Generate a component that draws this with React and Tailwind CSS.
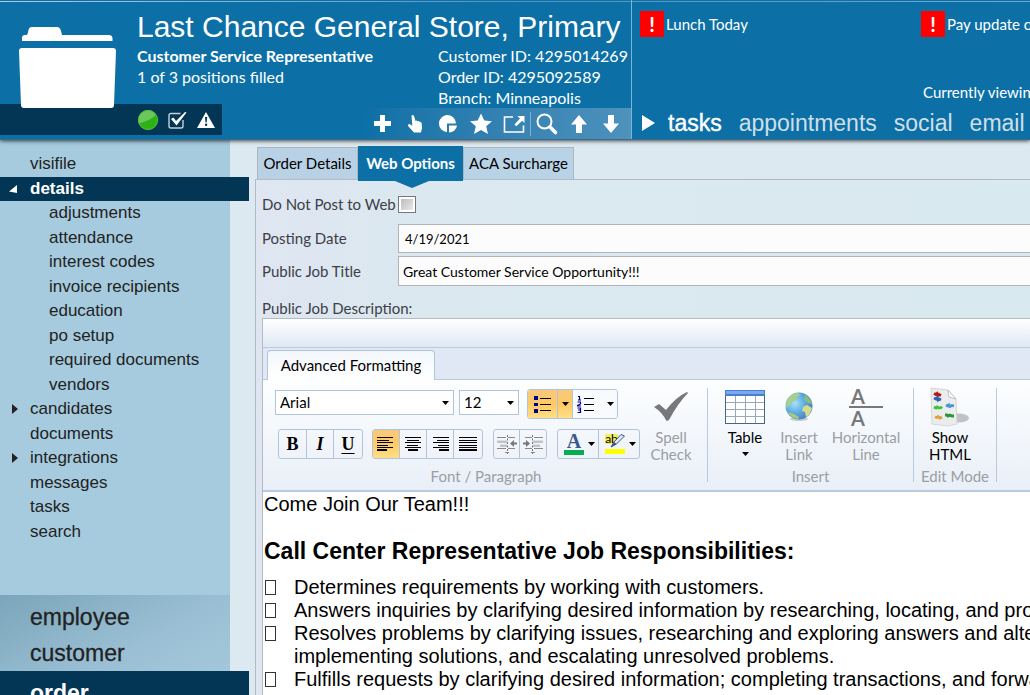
import { useState } from 'react';

const menuItems = [
  { label: 'visifile' },
  { label: 'details', open: true, active: true },
  { label: 'adjustments', child: true },
  { label: 'attendance', child: true },
  { label: 'interest codes', child: true },
  { label: 'invoice recipients', child: true },
  { label: 'education', child: true },
  { label: 'po setup', child: true },
  { label: 'required documents', child: true },
  { label: 'vendors', child: true },
  { label: 'candidates', closed: true },
  { label: 'documents' },
  { label: 'integrations', closed: true },
  { label: 'messages' },
  { label: 'tasks' },
  { label: 'search' },
];

const alerts = ['Lunch Today', 'Pay update on'];
const feeds = ['tasks', 'appointments', 'social', 'email'];

const duties = [
  ['Determines requirements by working with customers.'],
  ['Answers inquiries by clarifying desired information by researching, locating, and providing'],
  [
    'Resolves problems by clarifying issues, researching and exploring answers and alternative',
    'implementing solutions, and escalating unresolved problems.',
  ],
  ['Fulfills requests by clarifying desired information; completing transactions, and forwarding'],
];

const Caret = ({ className = '' }) => (
  <svg width="7" height="4" viewBox="0 0 7 4" className={className}>
    <path d="M0 0h7L3.5 4z" fill="#000" />
  </svg>
);

/* ---------- header ---------- */

const FolderIcon = () => (
  <svg width="97" height="82" viewBox="0 0 97 82" className="absolute left-[19px] top-[27px]" fill="#fff">
    <path d="M3 14V11Q3 8 6 8H8Q9 6 9.500 3Q10 0 13 0H38Q41 0 42 4L43 8H90Q93 8 93.500 11V14Z" />
    <path d="M0 24Q0 21 3 21H94Q97 21 97 24L95 78Q95 81 92 81H5Q2 81 2 78Z" />
  </svg>
);

const StatusBar = () => (
  <div className="flex h-[31px] w-[222px] items-center bg-[#033654] pl-[138px]">
    <svg width="20" height="20" viewBox="0 0 20 20">
      <circle cx="10" cy="10" r="10" fill="#2bb214" />
      <path d="M0.500 9A9.600 9.600 0 0 1 18 4.500Q14 10 1 13.500Q0 11 0.500 9Z" fill="#6dc65c" />
      <circle cx="10" cy="10" r="9.500" fill="none" stroke="#58bd47" />
    </svg>
    <svg width="19" height="18" viewBox="0 0 19 18" className="ml-[10px]">
      <path d="M12.500 2.500H3Q1 2.500 1 4.500V15Q1 17 3 17H13Q15 17 15 15V9" fill="none" stroke="#c5d0d8" strokeWidth="1.400" />
      <path d="M3 8L5.500 6.500L8 10L17 1L18.500 1.500L8.500 14.500Z" fill="#fff" />
    </svg>
    <svg width="18" height="16" viewBox="0 0 18 16" className="ml-[10px]">
      <path d="M9 0L18 16H0Z" fill="#fff" />
      <path d="M8 5h2.200l-.5 5.500h-1.200z" fill="#033654" />
      <circle cx="9.100" cy="12.700" r="1.200" fill="#033654" />
    </svg>
  </div>
);

const tools = [
  { label: 'Add', draw: <path d="M10 3h5v6h6v5h-6v6h-5v-6h-6v-5h6z" /> },
  {
    label: 'Actions',
    draw: (
      <path d="M8.500 3.500Q10 2.500 11 4L12.500 9Q13.500 8 14.500 9.200Q15.700 8.400 16.500 9.800Q18.300 9.300 18.700 11.500L19 16Q18.500 18 18 20.500H11L5 14Q4.500 12 6.500 12L9.300 13.800Z" />
    ),
  },
  {
    label: 'Chart',
    draw: (
      <>
        <path d="M11 11.500V20A8.500 8.500 0 1 1 19.800 10V11.500Z" />
        <path d="M13 13.500H21A8 8 0 0 1 13 20.500Z" />
      </>
    ),
  },
  {
    label: 'Favorite',
    draw: <path d="M12 1.500L15.300 8.500L23 9.300L17.200 14.300L19 22L12 18L5 22L6.800 14.300L1 9.300L8.700 8.500Z" />,
  },
  {
    label: 'Open in window',
    draw: (
      <>
        <path d="M11 5H2.500V20H21.500V13.500" fill="none" stroke="#fff" strokeWidth="1.600" />
        <path d="M15.500 4H22.500V11L20.200 8.700L14.300 14.200L12.500 12.400L18 6.500Z" />
      </>
    ),
  },
];

const recordTools = [
  {
    label: 'Search',
    draw: (
      <>
        <circle cx="9.500" cy="9.500" r="7" fill="none" stroke="#fff" strokeWidth="2" />
        <path d="M15 15L20.500 20.500" stroke="#fff" strokeWidth="3.600" strokeLinecap="round" />
      </>
    ),
  },
  { label: 'Previous', draw: <path d="M12 3L20 12.500H15V21H9V12.500H4Z" /> },
  { label: 'Next', draw: <path d="M12 21L20 11.500H15V3H9V11.500H4Z" /> },
];

const ToolIcon = ({ children }) => (
  <svg width="24" height="24" viewBox="0 0 24 24" fill="#fff">
    {children}
  </svg>
);

const RecordToolbar = () => (
  <div className="flex h-[31px] items-center self-end bg-linear-to-r from-[#0c70a6] to-[#4e92bd] pr-1">
    {tools.map((t) => (
      <button key={t.label} aria-label={t.label} className="flex w-[33px] justify-center">
        <ToolIcon>{t.draw}</ToolIcon>
      </button>
    ))}
    <div className="flex border-l border-[#7fb2d2]">
      {recordTools.map((t) => (
        <button key={t.label} aria-label={t.label} className="flex w-8 justify-center">
          <ToolIcon>{t.draw}</ToolIcon>
        </button>
      ))}
    </div>
  </div>
);

const Header = () => (
  <header className="relative z-20 flex border-b border-[#3b6a85] bg-[#0c70a6] text-white shadow-[0_1px_4px_rgba(0,0,0,0.7)]">
    <div className="absolute inset-x-0 top-px h-px bg-linear-to-r from-[#a9cde2] via-[#4d95c0] to-[#6aa9cd]" />
    <div className="relative w-[632px] shrink-0 border-r border-[#7db3d3] pt-[9px]">
      <FolderIcon />
      <div className="pl-[137px]">
        <h1 className="h-9 text-[30px] leading-9 whitespace-nowrap">Last Chance General Store, Primary</h1>
        <div className="flex font-[family-name:Lato,sans-serif] text-base leading-[21px] whitespace-nowrap">
          <div className="w-[301px]">
            <p className="font-bold">Customer Service Representative</p>
            <p>1 of 3 positions filled</p>
          </div>
          <div>
            <p>Customer ID: 4295014269</p>
            <p>Order ID: 4295092589</p>
            <p>Branch: Minneapolis</p>
          </div>
        </div>
      </div>
      <div className="-mt-1 flex h-[35px] justify-between">
        <StatusBar />
        <RecordToolbar />
      </div>
    </div>
    <div className="flex min-w-0 flex-1 flex-col justify-between overflow-hidden pl-2 pt-[11px] whitespace-nowrap">
      <div className="flex font-[family-name:Lato,sans-serif] text-[15px]">
        {alerts.map((a) => (
          <div key={a} className="flex w-[281px] shrink-0 items-center gap-[2px]">
            <span className="flex h-[26px] w-6 items-center justify-center bg-[#fe0000] text-xl leading-6 font-bold">!</span>
            {a}
          </div>
        ))}
      </div>
      <div>
        <p className="pl-[283px] font-[family-name:Lato,sans-serif] text-[15px] leading-[30px]">Currently viewing</p>
        <nav className="flex h-8 items-center gap-[17px] text-[23px] text-[#cfdfe9]">
          <svg width="13" height="16" viewBox="0 0 13 16" className="ml-[2px] -mr-1 shrink-0">
            <path d="M0 0L13 8L0 16Z" fill="#fff" />
          </svg>
          {feeds.map((f) => (
            <a key={f} href={`#${f}`} className={f === 'tasks' ? 'text-white [-webkit-text-stroke:0.4px_white]' : ''}>
              {f}
            </a>
          ))}
        </nav>
      </div>
    </div>
  </header>
);

/* ---------- sidebar ---------- */

const MenuItem = ({ item }) => (
  <li className={item.active ? 'relative z-10 w-[249px] bg-[#033654] font-bold text-white' : ''}>
    <a href="#menu" className="flex h-full items-center">
      <span className={item.child ? 'w-[49px]' : 'w-[30px]'}>
        {item.open && (
          <svg width="9" height="8" viewBox="0 0 9 8" className="ml-[9px]">
            <path d="M0 6.500L8 0V8Z" fill="#fff" />
          </svg>
        )}
        {item.closed && (
          <svg width="6" height="10" viewBox="0 0 6 10" className="ml-3">
            <path d="M0 0L6 5L0 10Z" fill="#222" />
          </svg>
        )}
      </span>
      {item.label}
    </a>
  </li>
);

const Sidebar = () => (
  <aside className="flex w-[230px] shrink-0 flex-col bg-[#a6cbde] pt-3 text-[#222]">
    <ul className="grid h-[392px] shrink-0 auto-rows-fr text-[17px] leading-6">
      {menuItems.map((item) => (
        <MenuItem key={item.label} item={item} />
      ))}
    </ul>
    <nav className="mt-[51px] flex-1 bg-linear-to-br from-[#7ba5ba] via-[#9abfd4] to-[#a9cbdd] pt-1 text-[23px]">
      <a href="#employee" className="flex h-9 items-center pl-[30px] [-webkit-text-stroke:0.3px_#222]">employee</a>
      <a href="#customer" className="flex h-9 items-center pl-[30px] [-webkit-text-stroke:0.3px_#222]">customer</a>
      <a href="#order" className="relative z-10 flex h-11 w-[249px] items-center bg-[#033654] pl-[30px] font-bold text-white">
        order
      </a>
    </nav>
  </aside>
);

/* ---------- rich text editor ---------- */

const boxed = 'flex h-[30px] overflow-hidden rounded-[3px] border border-[#b2c4da] divide-x divide-[#b2c4da]';
const pressed = 'bg-linear-to-b from-[#f9c87c] via-[#ffc965] to-[#ffdf86]';

const alignShift = { left: 0, center: 1, right: 2 };

const AlignIcon = ({ mode }) => {
  const widths = [16, 12, 16, 11, 16, 10];
  return (
    <svg width="18" height="14" viewBox="0 0 18 14" fill="#000" shapeRendering="crispEdges">
      {widths.map((w, i) => {
        const width = mode === 'justify' ? 18 : w;
        const x = mode === 'justify' ? 0 : Math.floor((alignShift[mode] * (18 - width)) / 2);
        return <rect key={i} x={x} y={[0, 3, 5, 8, 10, 12][i]} width={width} height={i === 5 ? 2 : 1} />;
      })}
    </svg>
  );
};

const IndentIcon = ({ out }) => (
  <svg width="20" height="19" viewBox="0 0 20 19">
    <g transform={out ? '' : 'translate(20 0) scale(-1 1)'}>
      <path d="M0 2.500h9M11 2.500h7M0 13.500h9M11 13.500h7M8 17.500h4" stroke="#8a8a8a" />
      <path d="M0 5.500h10v2.500h-10zM3 9.500h7v2.500h-7z" fill="#c4c4c4" />
      <path d="M10.500 0v19" stroke="#777" strokeDasharray="2 1.500" />
      <path d="M13 8.500L17 5v2.500h3v2h-3V12Z" fill="#777" />
    </g>
  </svg>
);

const BulletsIcon = () => (
  <svg width="18" height="18" viewBox="0 0 18 18">
    <path d="M0 1h4v4h-4zM0 8h4v3h-4zM0 14h4v4h-4z" fill="#00008b" />
    <path d="M6 3.500h11M6 9.500h11M6 15.500h11" stroke="#000" />
  </svg>
);

const NumbersIcon = () => (
  <svg width="18" height="18" viewBox="0 0 18 18">
    <path
      d="M1 1.500h1.500V5M1 5h3M0.500 7h3v2l-3 1.500v.5h3.500M0.500 13h3v4.500h-3M1 15h2.500"
      fill="none"
      stroke="#00008b"
      strokeWidth="1.200"
    />
    <path d="M7 3.500h10M7 9.500h10M7 15.500h10" stroke="#000" />
  </svg>
);

const HighlightIcon = () => (
  <span className="relative flex h-5 w-5 flex-col">
    <span className="h-[10px] w-[13px] bg-[#f3ef5f] text-xs leading-[10px] text-black">ab</span>
    <svg width="20" height="14" viewBox="0 0 20 14" className="absolute left-0 top-0">
      <path d="M6 13L9 8L16 0.500L19.500 2L11.500 10Z" fill="#dfe8f5" stroke="#3c5680" />
      <path d="M6 13L9 8L11.500 10Z" fill="#3c5680" />
    </svg>
    <span className="mt-[5px] h-[5px] w-5 bg-[#ffff00]" />
  </span>
);

const TableIcon = () => (
  <svg width="40" height="34" viewBox="0 0 40 34">
    <rect x="0.500" y="0.500" width="39" height="33" fill="#fff" stroke="#47648c" />
    <path d="M0 0h40v6h-40z" fill="#4a7fd0" />
    <path d="M1 1h38v3h-38z" fill="#7ba8ee" />
    <path d="M10.500 6v27M20.500 6v27M30.500 6v27M1 12.500h38M1 19.500h38M1 26.500h38" stroke="#9aa7b8" />
  </svg>
);

const GlobeIcon = () => (
  <svg width="28" height="30" viewBox="0 0 28 30">
    <defs>
      <radialGradient id="sea" cx="0.350" cy="0.400" r="0.700">
        <stop offset="0" stopColor="#a8e2f8" />
        <stop offset="0.500" stopColor="#5eaee4" />
        <stop offset="1" stopColor="#4a78ba" />
      </radialGradient>
    </defs>
    <ellipse cx="14" cy="27" rx="9" ry="2" fill="#c8ced6" />
    <circle cx="14" cy="14" r="13.500" fill="url(#sea)" />
    <path d="M2 8Q6 1 13 1L16 3L12 5L11 8L7 10L4 14L1.500 16Q0.500 12 2 8Z" fill="#a6cf8b" />
    <path d="M20 3Q26 7 27 12L23 11L19 8Z" fill="#8dbd7b" />
    <path d="M18 15L22 13L27 16Q25 23 21 25L20 20L17 19Z" fill="#d5dc8c" />
    <path d="M3 20L9 22L14 25L13 27Q6 26 3 20Z" fill="#a8cb76" />
  </svg>
);

const HtmlIcon = () => (
  <svg width="40" height="40" viewBox="0 0 40 40">
    <ellipse cx="28" cy="31" rx="11" ry="4.500" fill="#bfc2c7" />
    <path d="M1 1L18 3L26 12L27 37L18 39L2 37Z" fill="#ececed" stroke="#d5d7da" />
    <path d="M18 3L19 10L26 12Z" fill="#fff" stroke="#a8abb0" strokeWidth="0.700" />
    <g fill="none" strokeWidth="2.800">
      <path d="M4 6.500l2 1l1-1l1 2l1-1l2 1" stroke="#b01c1c" />
      <path d="M4 11l2 1l1-1l1 2l1-1l2 1" stroke="#2a62b4" />
      <path d="M4 20l2 1l1-1l2 1l2-.5l1 1" stroke="#38c83c" />
      <path d="M16 18l2 1l1-1l1 1.500l2-1l2 .5" stroke="#4a94e0" />
      <path d="M15 28l2 0l1 1l2-1l2 1l2 0" stroke="#28963a" />
      <path d="M5 30l2 .5l1-1l2 1.500l2-1" stroke="#dfa03c" />
    </g>
  </svg>
);

const Dropdown = ({ label, value, options, className }) => (
  <div className={`relative h-[25px] ${className}`}>
    <select
      aria-label={label}
      defaultValue={value}
      className="h-full w-full appearance-none border border-[#b2c4da] bg-white pl-1 text-[15px] text-black"
    >
      {options.map((o) => (
        <option key={o}>{o}</option>
      ))}
    </select>
    <Caret className="pointer-events-none absolute right-[5px] top-[11px]" />
  </div>
);

const BigButton = ({ icon, children, className = '' }) => (
  <button className={`flex flex-col items-center text-center text-[15px] leading-[17px] ${className}`}>
    <span className="flex h-[41px] items-center justify-center pb-1">{icon}</span>
    {children}
  </button>
);

const GroupLabel = ({ children, className = '' }) => (
  <div className={`mt-auto text-center text-[15px] leading-3 text-[#9b9ea3] ${className}`}>{children}</div>
);

const FontGroup = () => (
  <div className="flex w-[433px] shrink-0 flex-col border-r border-[#b9cadd]">
    <div className="flex">
      <div className="w-[366px]">
        <div className="flex items-start">
          <Dropdown label="Font" value="Arial" options={['Arial', 'Calibri', 'Verdana']} className="mt-[2px] w-[179px]" />
          <Dropdown label="Size" value="12" options={['10', '12', '14']} className="mt-[2px] ml-[5px] w-[60px]" />
          <div className={`${boxed} ml-2 mt-px`}>
            <button aria-label="Bullets" className={`flex w-[30px] items-center justify-center ${pressed}`}>
              <BulletsIcon />
            </button>
            <button aria-label="Bullet styles" className={`flex w-[15px] items-center justify-center ${pressed}`}>
              <Caret />
            </button>
            <button aria-label="Numbering" className="flex w-11 items-center gap-3 bg-[#f8fafd] pl-1">
              <NumbersIcon />
              <Caret />
            </button>
          </div>
        </div>
        <div className="mt-[10px] ml-[3px] flex">
          <div className={`${boxed} font-[family-name:Liberation_Serif,serif] text-lg leading-7 text-black`}>
            <button className="w-7 font-bold">B</button>
            <button className="w-[27px] font-bold italic">I</button>
            <button className="w-7 font-bold underline underline-offset-3 decoration-1">U</button>
          </div>
          <div className={`${boxed} ml-[9px]`}>
            {['left', 'center', 'right', 'justify'].map((mode) => (
              <button
                key={mode}
                aria-label={`Align ${mode}`}
                className={`flex w-[27px] items-center justify-center last:w-7 ${mode === 'left' ? pressed : ''}`}
              >
                <AlignIcon mode={mode} />
              </button>
            ))}
          </div>
          <div className={`${boxed} ml-[10px]`}>
            <button aria-label="Outdent" className="flex w-[26px] items-center justify-center">
              <IndentIcon out />
            </button>
            <button aria-label="Indent" className="flex w-[26px] items-center justify-center">
              <IndentIcon />
            </button>
          </div>
          <div className={`${boxed} ml-[10px]`}>
            <button aria-label="Font color" className="flex w-[41px] items-center gap-1 pl-[6px]">
              <span className="flex w-5 flex-col items-center font-[family-name:Liberation_Serif,serif] text-xl leading-[15px] font-bold text-[#37598f]">
                A
                <span className="mt-px h-[5px] w-5 bg-[#06ad50]" />
              </span>
              <Caret />
            </button>
            <button aria-label="Highlight" className="flex w-10 items-center gap-1 pl-[6px]">
              <HighlightIcon />
              <Caret />
            </button>
          </div>
        </div>
      </div>
      <BigButton
        className="ml-[7px] w-[46px] text-[#9b9ea3]"
        icon={
          <svg width="34" height="29" viewBox="0 0 34 29">
            <path d="M0 15L5 12L12 18Q22 5 33 0L34 1Q24 11 15 28L12.500 29Q8 20 0 15Z" fill="#77787b" />
          </svg>
        }
      >
        Spell
        <br />
        Check
      </BigButton>
    </div>
    <GroupLabel className="pr-[10px]">Font / Paragraph</GroupLabel>
  </div>
);

const InsertGroup = () => (
  <div className="flex w-[206px] shrink-0 flex-col border-r border-[#b9cadd]">
    <div className="flex">
      <BigButton className="w-[74px] text-black" icon={<TableIcon />}>
        Table
        <Caret className="mt-[6px]" />
      </BigButton>
      <BigButton className="w-[34px] text-[#9b9ea3]" icon={<GlobeIcon />}>
        Insert
        <br />
        Link
      </BigButton>
      <BigButton
        className="ml-[14px] w-[72px] text-[#9b9ea3]"
        icon={
          <span className="flex flex-col items-center text-xl leading-5 font-bold text-[#77787b]">
            <span className="w-[34px] border-b-2 border-[#77787b] pr-4">A</span>
            <span className="w-[34px] pr-4">A</span>
          </span>
        }
      >
        Horizontal
        <br />
        Line
      </BigButton>
    </div>
    <GroupLabel>Insert</GroupLabel>
  </div>
);

const EditModeGroup = () => (
  <div className="flex w-[83px] shrink-0 flex-col border-r border-[#b9cadd]">
    <BigButton className="w-[72px] text-black" icon={<HtmlIcon />}>
      Show
      <br />
      HTML
    </BigButton>
    <GroupLabel className="whitespace-nowrap">Edit Mode</GroupLabel>
  </div>
);

const Editor = () => (
  <div className="flex flex-1 flex-col border-t border-l border-[#b4bac1] bg-white">
    <div className="font-[family-name:Lato,sans-serif]">
      <div className="h-[29px] border-b border-[#b9cadd] bg-linear-to-b from-white to-[#dfe8f4]" />
      <div className="flex h-8 items-end bg-[#dfe8f4] pl-1 shadow-[inset_0_-1px_0_#b9cadd]">
        <button className="h-[30px] w-[168px] rounded-t-[4px] border border-b-0 border-[#b2c4da] bg-linear-to-b from-[#f3f7fc] to-white text-[15px] text-black">
          Advanced Formatting
        </button>
      </div>
      <div className="flex h-28 border-b-2 border-[#b9cadd] bg-linear-to-b from-[#fdfefe] to-[#e9eff8] pt-2 pb-2 pl-3">
        <FontGroup />
        <InsertGroup />
        <EditModeGroup />
      </div>
    </div>
    <div className="pl-px text-xl leading-[23px] whitespace-nowrap text-black">
      <p className="pt-px">Come Join Our Team!!!</p>
      <h2 className="mt-[21px] text-[23px] leading-7 font-bold">Call Center Representative Job Responsibilities:</h2>
      <ul className="mt-[11px]">
        {duties.map((lines) => (
          <li key={lines[0]} className="flex">
            <span className="mt-[4px] mr-[18px] ml-px h-[15px] w-[11px] shrink-0 border border-[#333]" />
            <span>
              {lines.map((line) => (
                <span key={line} className="block">
                  {line}
                </span>
              ))}
            </span>
          </li>
        ))}
      </ul>
    </div>
  </div>
);

/* ---------- main panel ---------- */

const Tabs = () => (
  <div role="tablist" className="relative z-10 ml-[2px] flex h-[33px] items-end text-[15px] text-black">
    <button role="tab" className="h-8 w-[101px] border border-b-0 border-[#adb5bd] bg-[#b9d1e5]">
      Order Details
    </button>
    <button role="tab" aria-selected="true" className="relative -mb-[2px] h-[35px] w-[105px] bg-[#0c70a6] font-bold text-white">
      Web Options
      <svg width="34" height="7" viewBox="0 0 34 7" className="absolute left-[37px] top-full">
        <path d="M0 0H34L17 7Z" fill="#0c70a6" />
      </svg>
    </button>
    <button role="tab" className="h-8 w-[111px] border border-b-0 border-[#adb5bd] bg-[#b9d3e6]">
      ACA Surcharge
    </button>
  </div>
);

const Main = () => {
  const [hidden, setHidden] = useState(false);

  return (
    <main className="ml-[25px] flex min-w-0 flex-1 flex-col overflow-hidden pt-[6px] font-[family-name:Lato,sans-serif]">
      <Tabs />
      <div className="flex flex-1 flex-col border-t border-l border-[#b4bac1] bg-linear-to-r from-[#dfe6f1] via-[#dbe8f0] via-20% to-[#d9e9f0] pl-[6px] text-[15px] text-[#3c4046]">
        <div className="mt-[12px] flex h-6 items-center">
          <label htmlFor="no-post" className="w-[136px]">Do Not Post to Web</label>
          <input
            id="no-post"
            type="checkbox"
            checked={hidden}
            onChange={() => setHidden(!hidden)}
            className="h-[17px] w-[18px] appearance-none border border-[#777] bg-linear-to-br from-[#b5b5b5] to-[#f0f0f0] shadow-[inset_0_0_0_2px_#fff] checked:bg-[#555]"
          />
        </div>
        <div className="mt-2 flex items-center">
          <label htmlFor="posting-date" className="w-[136px] shrink-0">Posting Date</label>
          <input
            id="posting-date"
            defaultValue="4/19/2021"
            className="h-[29px] min-w-0 flex-1 border border-r-0 border-[#b0b4b8] bg-[#fcfcfc] pl-[6px] text-[13px] text-black"
          />
        </div>
        <div className="mt-[3px] flex items-center">
          <label htmlFor="job-title" className="w-[136px] shrink-0">Public Job Title</label>
          <input
            id="job-title"
            defaultValue="Great Customer Service Opportunity!!!"
            className="h-[30px] min-w-0 flex-1 border border-r-0 border-[#b0b4b8] bg-[#fcfcfc] pl-1 text-sm text-black"
          />
        </div>
        <p className="mt-[12px] leading-5">Public Job Description:</p>
        <div className="flex flex-1 flex-col font-[family-name:Liberation_Sans,Arial,sans-serif]">
          <Editor />
        </div>
      </div>
    </main>
  );
};

const App = () => (
  <div className="flex h-screen flex-col overflow-hidden bg-[#dce9f1] font-[family-name:Liberation_Sans,Arial,sans-serif]">
    <Header />
    <div className="flex min-h-0 flex-1">
      <Sidebar />
      <Main />
    </div>
  </div>
);

export default App;
